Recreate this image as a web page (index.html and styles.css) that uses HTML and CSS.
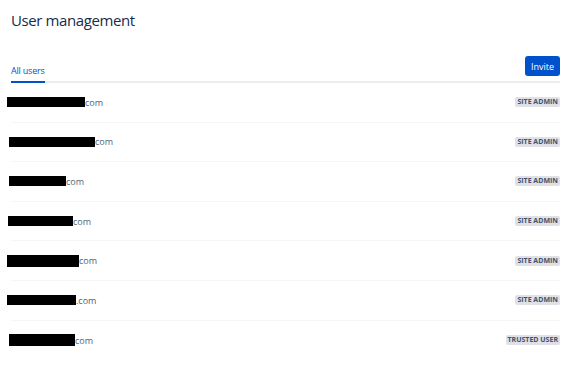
FILE: index.html
```html
<!DOCTYPE html>
<html lang="en">
<head>
    <meta charset="UTF-8">
    <title>User management</title>
    <link rel="stylesheet" href="styles.css">
</head>
<body>
    <div class="page">
        <h1 class="page-title">User management</h1>

        <div class="toolbar">
            <div class="tabs">
                <span class="tab active">All users</span>
            </div>
            <button class="invite-button">Invite</button>
        </div>

        <ul class="user-list">
            <li class="user-row">
                <span class="email"><span class="redacted" style="width: 78px"></span>com</span>
                <span class="lozenge">Site admin</span>
            </li>
            <li class="user-row">
                <span class="email shift-2"><span class="redacted" style="width: 86px"></span>com</span>
                <span class="lozenge">Site admin</span>
            </li>
            <li class="user-row">
                <span class="email shift-2"><span class="redacted" style="width: 57px"></span>com</span>
                <span class="lozenge">Site admin</span>
            </li>
            <li class="user-row">
                <span class="email shift-1"><span class="redacted" style="width: 65px"></span>com</span>
                <span class="lozenge">Site admin</span>
            </li>
            <li class="user-row">
                <span class="email"><span class="redacted tall" style="width: 72px"></span>com</span>
                <span class="lozenge">Site admin</span>
            </li>
            <li class="user-row">
                <span class="email"><span class="redacted" style="width: 69px"></span>.com</span>
                <span class="lozenge">Site admin</span>
            </li>
            <li class="user-row">
                <span class="email shift-2"><span class="redacted tall" style="width: 66px"></span>com</span>
                <span class="lozenge">Trusted user</span>
            </li>
        </ul>
    </div>
</body>
</html>
```

FILE: styles.css
```css
body {
    margin: 0;
    font-family: 'Open Sans', 'Noto Sans', sans-serif;
    color: #172b4d;
    background: #ffffff;
}

.page {
    padding: 9px 16px 0 11px;
}

.page-title {
    margin: 0;
    font-size: 15px;
    font-weight: 500;
    line-height: 22px;
    letter-spacing: -0.4px;
    color: #172b4d;
}

.toolbar {
    display: flex;
    align-items: flex-end;
    justify-content: space-between;
    margin-top: 25px;
    border-bottom: 2px solid #ebecf0;
}

.tabs {
    display: flex;
}

.tab {
    font-size: 9px;
    line-height: 12px;
    padding-bottom: 4px;
    color: #42526e;
    margin-bottom: -2px;
    border-bottom: 2px solid transparent;
    letter-spacing: -0.2px;
}

.tab.active {
    color: #0052cc;
    border-bottom-color: #0052cc;
}

.invite-button {
    margin-bottom: 5px;
    height: 20px;
    padding: 0 6px;
    border: none;
    border-radius: 3px;
    background: #0052cc;
    color: #ffffff;
    font-family: inherit;
    font-size: 9px;
}

.user-list {
    list-style: none;
    margin: 0;
    padding: 0;
}

.user-row {
    display: flex;
    align-items: center;
    justify-content: space-between;
    height: 39.6px;
    box-sizing: border-box;
    border-bottom: 1px solid #f4f5f7;
}

.user-row:last-child {
    border-bottom: none;
}

.email {
    display: flex;
    align-items: center;
    margin-left: -4px;
    font-size: 9px;
    color: #505f79;
}

.email.shift-1 {
    margin-left: -3px;
}

.email.shift-2 {
    margin-left: -2px;
}

.redacted {
    display: inline-block;
    height: 10px;
    background: #000000;
}

.redacted.tall {
    height: 12px;
}

.lozenge {
    padding: 0 2px;
    border-radius: 2px;
    background: #dfe1e6;
    color: #42526e;
    font-size: 7px;
    font-weight: 700;
    line-height: 10px;
    text-transform: uppercase;
}
```
